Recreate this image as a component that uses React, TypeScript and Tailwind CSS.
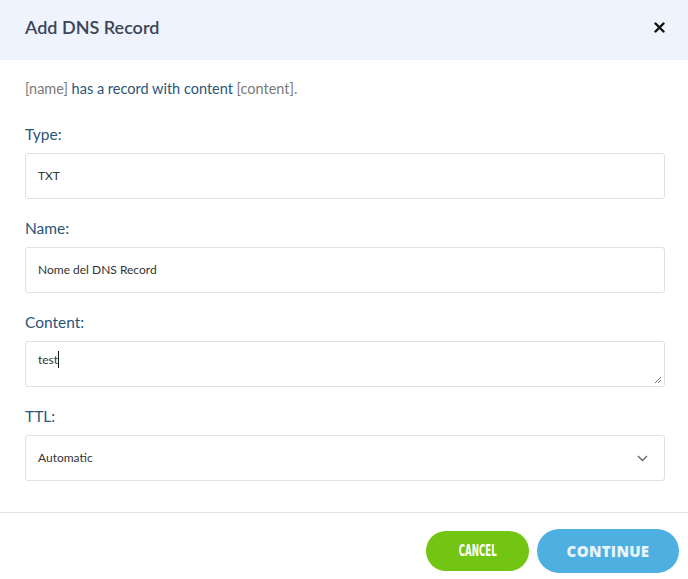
import React from "react";

// Add DNS Record modal — static recreation

const FONT = { fontFamily: "Lato, 'Open Sans', sans-serif" };

function Field({ label, children }: { label: string; children: React.ReactNode }) {
  return (
    <div className="flex flex-col">
      <label className="text-[15.5px] leading-[18px] text-[#2a5577] mb-[10px]">{label}</label>
      {children}
    </div>
  );
}

export default function App() {
  return (
    <div className="w-[688px] h-[579px] bg-white flex flex-col overflow-hidden" style={FONT}>
      {/* Header */}
      <div className="h-[60px] bg-[#eff3fe] flex items-center justify-between pl-[25px] pr-[23px] pb-[6px] shrink-0">
        <h1 className="text-[18px] font-semibold text-[#3b4658]">Add DNS Record</h1>
        <svg width="11" height="11" viewBox="0 0 11 11">
          <path d="M1.5 1.5 L9.5 9.5 M9.5 1.5 L1.5 9.5" stroke="#111" strokeWidth="2.4" strokeLinecap="round" />
        </svg>
      </div>

      {/* Body */}
      <div className="pl-[25px] pr-[23px] pt-[19px] flex flex-col">
        <p className="text-[14.5px] leading-5 text-[#2a5577]">
          <span className="text-[#7a7a7a]">[name]</span> has a record with content{" "}
          <span className="text-[#7a7a7a]">[content].</span>
        </p>

        <div className="mt-[26px] flex flex-col gap-[20px]">
          <Field label="Type:">
            <div className="h-[46px] border border-[#e0e0e0] rounded-[3px] flex items-center px-3 text-[12px] text-[#333]">
              TXT
            </div>
          </Field>
          <Field label="Name:">
            <div className="h-[46px] border border-[#e0e0e0] rounded-[3px] flex items-center px-3 text-[12px] text-[#333]">
              Nome del DNS Record
            </div>
          </Field>
          <Field label="Content:">
            <div className="relative h-[46px] border border-[#e0e0e0] rounded-[3px] px-3 pt-[10px] text-[12px] leading-4 text-[#333]">
              <span>test</span>
              <span className="inline-block w-px h-[17px] bg-[#111] align-middle -mt-[2px]" />
              <svg width="8" height="8" viewBox="0 0 8 8" className="absolute right-[2px] bottom-[2px]">
                <path d="M7 1 L1 7 M7 4 L4 7" stroke="#777" strokeWidth="1" />
              </svg>
            </div>
          </Field>
          <Field label="TTL:">
            <div className="h-[46px] border border-[#e0e0e0] rounded-[3px] flex items-center justify-between pl-3 pr-[16px] text-[12px] text-[#333]">
              <span>Automatic</span>
              <svg width="11" height="7" viewBox="0 0 11 7">
                <path d="M1 1 L5.5 5.5 L10 1" fill="none" stroke="#666" strokeWidth="1.4" />
              </svg>
            </div>
          </Field>
        </div>
      </div>

      {/* Footer */}
      <div className="mt-[31px] border-t border-[#e3e3e3] flex items-center justify-end gap-[8px] pr-[9px] pt-[16px]">
        <button
          className="w-[103px] h-[40px] rounded-full bg-[#72c512] text-white text-[15px] font-semibold uppercase"
          style={{ fontFamily: "'DejaVu Sans Condensed', sans-serif" }}
        >
          <span className="inline-block scale-x-[0.64]">Cancel</span>
        </button>
        <button
          className="w-[142px] h-[44px] rounded-full bg-[#4eb0e1] text-[#e9f5fc] text-[15px] font-extrabold tracking-[0.02em] uppercase"
          style={{ fontFamily: "'Open Sans', sans-serif" }}
        >
          Continue
        </button>
      </div>
    </div>
  );
}
